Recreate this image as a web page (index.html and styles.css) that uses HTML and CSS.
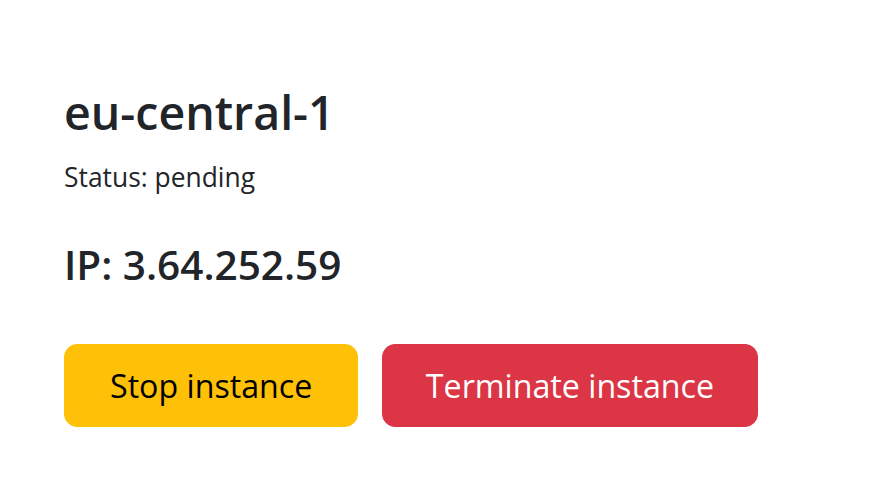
FILE: index.html
```html
<!DOCTYPE html>
<html lang="en">
<head>
<meta charset="utf-8">
<title>Instance</title>
<link rel="stylesheet" href="styles.css">
</head>
<body>
<main class="instance">
  <h1 class="instance-region">eu-central-1</h1>
  <p class="instance-status">Status: pending</p>
  <h2 class="instance-ip">IP: 3.64.252.59</h2>
  <div class="instance-actions">
    <button class="btn btn-warning" type="button">Stop instance</button>
    <button class="btn btn-danger" type="button">Terminate instance</button>
  </div>
</main>
</body>
</html>
```
FILE: styles.css
```css
* { box-sizing: border-box; }
html, body { margin: 0; background: #fff; }
body {
  font-family: "Open Sans", "Noto Sans", sans-serif;
  color: #212529;
}
.instance {
  padding: 85px 64px 0;
}
.instance-region {
  margin: 0 0 17px;
  font-size: 46.5px;
  line-height: 1.2;
  font-weight: 600;
}
.instance-status {
  margin: 0 0 44px;
  font-size: 26.4px;
  line-height: 1.5;
}
.instance-ip {
  margin: 0 0 54px;
  font-size: 40.5px;
  line-height: 1.2;
  font-weight: 600;
}
.instance-actions {
  display: flex;
  gap: 23.5px;
}
.btn {
  font-family: inherit;
  font-size: 32.2px;
  line-height: 54px;
  padding: 14px 43px 13px;
  border: 1px solid transparent;
  border-radius: 13px;
  cursor: pointer;
}
.btn-warning {
  padding-left: 45px;
  padding-right: 45px;
  background: #ffc107;
  border-color: #ffc107;
  color: #000;
}
.btn-danger {
  background: #dc3545;
  border-color: #dc3545;
  color: #fff;
}
```
